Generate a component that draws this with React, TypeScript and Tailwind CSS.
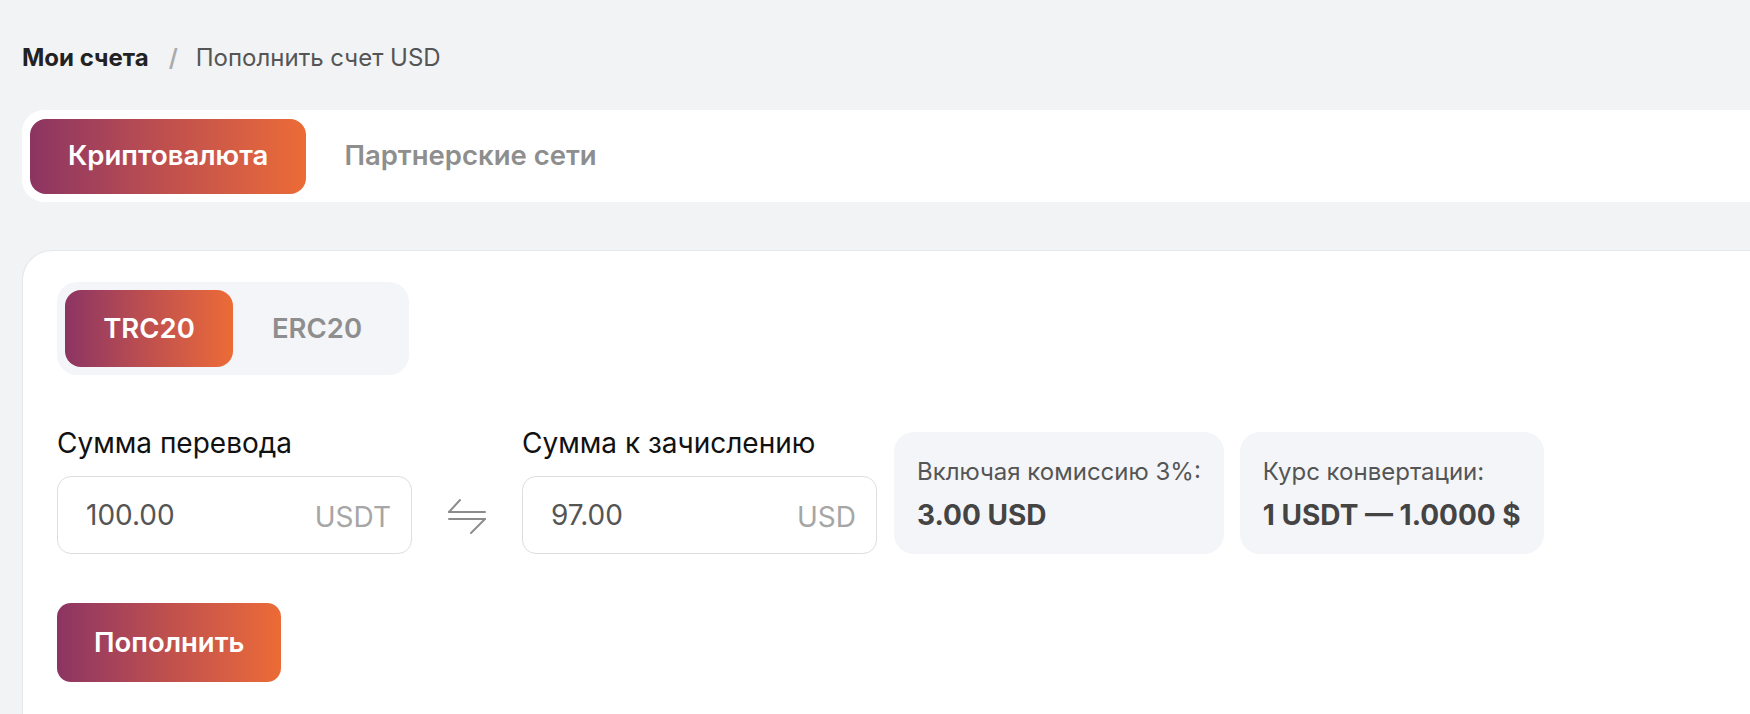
import React, { useState } from 'react';

const font = { fontFamily: 'Inter, "Noto Sans", sans-serif' };

function SwapIcon() {
  return (
    <svg width="40" height="40" viewBox="0 0 40 40" fill="none" stroke="#8c8c8c" strokeWidth="2" strokeLinecap="round">
      <path d="M2 17H38" />
      <path d="M2 17L13 5" />
      <path d="M2 24H38" />
      <path d="M38 24L24 38" />
    </svg>
  );
}

interface AmountInputProps {
  value: string;
  currency: string;
}

function AmountInput({ value, currency }: AmountInputProps) {
  return (
    <div className="flex h-[78px] w-[355px] items-center justify-between rounded-[14px] border-[1.5px] border-[#dedede] bg-white pl-[28px] pr-[20px]">
      <span className="text-[28px] text-[#555]">{value}</span>
      <span className="pt-1 text-[28px] text-[#a6a6a6]">{currency}</span>
    </div>
  );
}

export default function App() {
  const [tab, setTab] = useState('crypto');
  const [network, setNetwork] = useState('TRC20');

  const active = 'bg-linear-to-r from-[#8c3462] via-[#c0504d] to-[#ec6b35] text-white';

  return (
    <div className="flex h-[714px] flex-col overflow-hidden bg-[#f2f3f5] pl-[22px]" style={font}>
      <div className="flex items-center pt-[42px] text-[24px] leading-8">
        <span className="font-bold text-[#222]">Мои счета</span>
        <span className="ml-[20px] mr-[18px] font-semibold text-[#ababab]">/</span>
        <span className="text-[#555]">Пополнить счет USD</span>
      </div>

      <div className="mt-[36px] flex h-[92px] shrink-0 items-center rounded-l-[22px] bg-white pl-2">
        <button
          onClick={() => setTab('crypto')}
          className={`h-[75px] rounded-[16px] px-[38px] text-[27.5px] font-semibold ${tab === 'crypto' ? active : 'text-[#8e8e8e]'}`}
        >
          Криптовалюта
        </button>
        <button
          onClick={() => setTab('partners')}
          className={`h-[75px] rounded-[16px] px-[38px] text-[27.5px] font-semibold ${tab === 'partners' ? active : 'text-[#8e8e8e]'}`}
        >
          Партнерские сети
        </button>
      </div>

      <div className="mt-[48px] flex-1 rounded-tl-[30px] border-l border-t border-[#e6e7e9] bg-white pl-[34px] pt-[31px]">
        <div className="inline-flex rounded-[20px] bg-[#f4f5f8] p-[8px]">
          {['TRC20', 'ERC20'].map((n) => (
            <button
              key={n}
              onClick={() => setNetwork(n)}
              className={`h-[77px] w-[168px] rounded-[16px] text-[27.5px] font-semibold ${network === n ? active : 'text-[#8e8e8e]'}`}
            >
              {n}
            </button>
          ))}
        </div>

        <div className="mt-[52px] flex items-end">
          <div>
            <div className="mb-[17px] text-[28px] leading-8 text-[#111]">Сумма перевода</div>
            <AmountInput value="100.00" currency="USDT" />
          </div>
          <div className="mx-[35px] flex h-[78px] items-center">
            <SwapIcon />
          </div>
          <div>
            <div className="mb-[17px] text-[28px] leading-8 text-[#111]">Сумма к зачислению</div>
            <AmountInput value="97.00" currency="USD" />
          </div>
          <div className="ml-[17px] flex h-[122px] flex-col justify-center gap-[4px] rounded-[20px] bg-[#f4f5f8] px-[23px] pt-[4px]">
            <span className="text-[24px] text-[#555]">Включая комиссию 3%:</span>
            <span className="text-[28px] font-bold text-[#444]">3.00 USD</span>
          </div>
          <div className="ml-[16px] flex h-[122px] flex-col justify-center gap-[4px] rounded-[20px] bg-[#f4f5f8] px-[23px] pt-[4px]">
            <span className="text-[24px] text-[#555]">Курс конвертации:</span>
            <span className="text-[28px] font-bold text-[#444]">1 USDT — 1.0000 $</span>
          </div>
        </div>

        <button className={`mt-[49px] h-[79px] rounded-[14px] px-[37px] text-[27.5px] font-semibold ${active}`}>
          Пополнить
        </button>
      </div>
    </div>
  );
}
